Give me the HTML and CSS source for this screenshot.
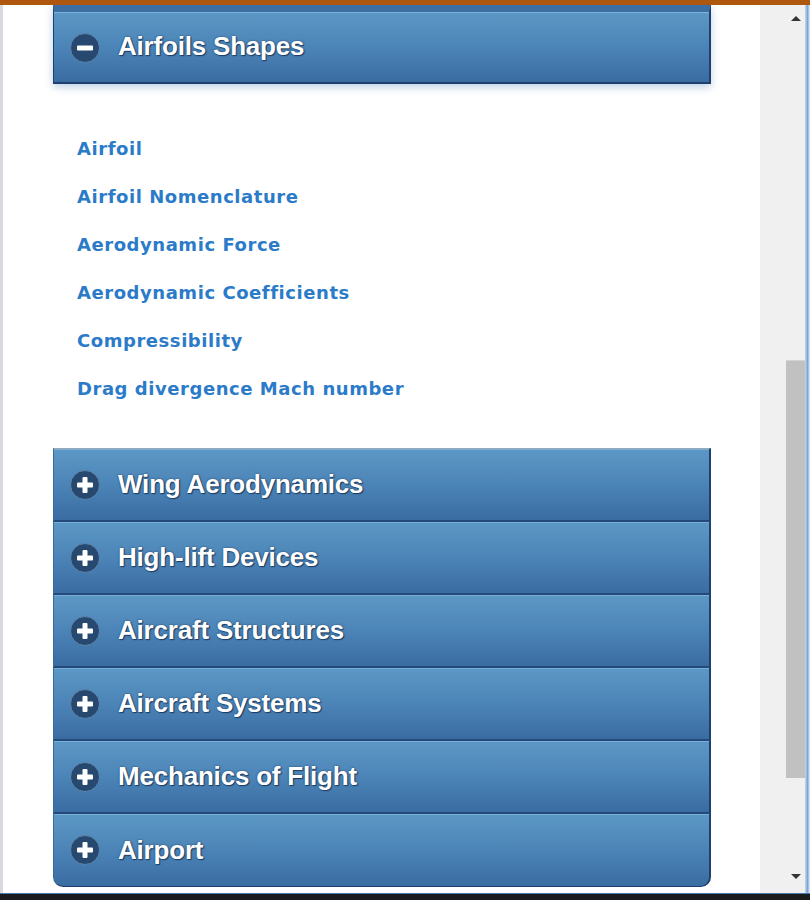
FILE: index.html
```html
<!DOCTYPE html>
<html>
<head>
<meta charset="utf-8">
<link rel="stylesheet" href="styles.css">
</head>
<body>
<div class="window">
  <div class="topbar"></div>
  <div class="main">
    <div class="content">
      <div class="accordion">
        <div class="header active">
          <span class="icon"><svg viewBox="0 0 30 30" width="30" height="30"><circle cx="15" cy="15" r="14.5" fill="#27496f" stroke="#5d86ad" stroke-width="1"/><rect x="7" y="12.5" width="16" height="5" rx="1" fill="#fff"/></svg></span>
          <span class="title">Airfoils Shapes</span>
        </div>
        <div class="panel">
          <a class="link">Airfoil</a>
          <a class="link">Airfoil Nomenclature</a>
          <a class="link">Aerodynamic Force</a>
          <a class="link">Aerodynamic Coefficients</a>
          <a class="link">Compressibility</a>
          <a class="link">Drag divergence Mach number</a>
        </div>
        <div class="group">
          <div class="header">
            <span class="icon"><svg viewBox="0 0 30 30" width="30" height="30"><circle cx="15" cy="15" r="14.5" fill="#27496f" stroke="#5d86ad" stroke-width="1"/><rect x="7" y="12.5" width="16" height="5" rx="1" fill="#fff"/><rect x="12.5" y="7" width="5" height="16" rx="1" fill="#fff"/></svg></span>
            <span class="title">Wing Aerodynamics</span>
          </div>
          <div class="header">
            <span class="icon"><svg viewBox="0 0 30 30" width="30" height="30"><circle cx="15" cy="15" r="14.5" fill="#27496f" stroke="#5d86ad" stroke-width="1"/><rect x="7" y="12.5" width="16" height="5" rx="1" fill="#fff"/><rect x="12.5" y="7" width="5" height="16" rx="1" fill="#fff"/></svg></span>
            <span class="title">High-lift Devices</span>
          </div>
          <div class="header">
            <span class="icon"><svg viewBox="0 0 30 30" width="30" height="30"><circle cx="15" cy="15" r="14.5" fill="#27496f" stroke="#5d86ad" stroke-width="1"/><rect x="7" y="12.5" width="16" height="5" rx="1" fill="#fff"/><rect x="12.5" y="7" width="5" height="16" rx="1" fill="#fff"/></svg></span>
            <span class="title">Aircraft Structures</span>
          </div>
          <div class="header">
            <span class="icon"><svg viewBox="0 0 30 30" width="30" height="30"><circle cx="15" cy="15" r="14.5" fill="#27496f" stroke="#5d86ad" stroke-width="1"/><rect x="7" y="12.5" width="16" height="5" rx="1" fill="#fff"/><rect x="12.5" y="7" width="5" height="16" rx="1" fill="#fff"/></svg></span>
            <span class="title">Aircraft Systems</span>
          </div>
          <div class="header">
            <span class="icon"><svg viewBox="0 0 30 30" width="30" height="30"><circle cx="15" cy="15" r="14.5" fill="#27496f" stroke="#5d86ad" stroke-width="1"/><rect x="7" y="12.5" width="16" height="5" rx="1" fill="#fff"/><rect x="12.5" y="7" width="5" height="16" rx="1" fill="#fff"/></svg></span>
            <span class="title">Mechanics of Flight</span>
          </div>
          <div class="header last">
            <span class="icon"><svg viewBox="0 0 30 30" width="30" height="30"><circle cx="15" cy="15" r="14.5" fill="#27496f" stroke="#5d86ad" stroke-width="1"/><rect x="7" y="12.5" width="16" height="5" rx="1" fill="#fff"/><rect x="12.5" y="7" width="5" height="16" rx="1" fill="#fff"/></svg></span>
            <span class="title">Airport</span>
          </div>
        </div>
      </div>
    </div>
    <div class="scrollbar">
      <div class="arrow up"></div>
      <div class="track"><div class="thumb"></div></div>
      <div class="arrow down"></div>
    </div>
    <div class="edge"></div>
  </div>
  <div class="taskbar"></div>
</div>
</body>
</html>
```
FILE: styles.css
```css
html, body {
  margin: 0;
  padding: 0;
  width: 810px;
  height: 900px;
  overflow: hidden;
  background: #ffffff;
}
.window {
  display: flex;
  flex-direction: column;
  width: 810px;
  height: 900px;
}
.topbar {
  height: 5px;
  background: #b0570f;
  flex: none;
  position: relative;
  z-index: 2;
}
.main {
  flex: 1;
  display: flex;
  min-height: 0;
}
.content {
  flex: 1;
  border-left: 3px solid #d7dbe0;
  padding-left: 50px;
  background: #fff;
}
.accordion {
  width: 658px;
}
.header {
  height: 73px;
  box-sizing: border-box;
  display: flex;
  align-items: center;
  padding-left: 16px;
  background: linear-gradient(#5c98c6, #4a82b5 55%, #3a6ca1);
  border-left: 1px solid #3a6a9c;
  border-right: 2px solid #1f3f6e;
  border-bottom: 2px solid #234a7a;
  box-shadow: inset 0 1px 0 #79aed6;
}
.header.active {
  height: 79px;
  border-top: 7px solid #3d6ea1;
  border-left: 1px solid #1f3f6e;
  border-bottom: 2px solid #1f3f6e;
  box-shadow: inset 0 1px 0 #7db2da, 0 3px 8px rgba(70, 120, 180, 0.35);
  position: relative;
  z-index: 1;
}
.header.last {
  height: 73px;
  border-bottom: 1px solid #1f3f6e;
  border-radius: 0 0 10px 10px;
}
.group .header:first-child {
  height: 74px;
  border-top: 1px solid #9aa7b4;
}
.icon {
  width: 30px;
  height: 30px;
  display: block;
  flex: none;
}
.icon svg {
  display: block;
}
.title {
  margin-left: 18px;
  font-family: "Liberation Sans", Arial, sans-serif;
  font-weight: bold;
  font-size: 26px;
  color: #ffffff;
  letter-spacing: -0.2px;
  text-shadow: 0 0 2px #1d3c62, 1px 1px 1px #1d3c62;
}
.header.active .title {
  margin-top: -1px;
}
.header.active .icon {
  margin-top: 2px;
}
.panel {
  display: flex;
  flex-direction: column;
  padding: 41px 0 35px 24px;
}
.link {
  display: block;
  line-height: 48px;
  height: 48px;
  font-family: "DejaVu Sans", Verdana, sans-serif;
  font-weight: bold;
  font-size: 18px;
  letter-spacing: 0.55px;
  color: #2b7bc9;
}
.scrollbar {
  width: 45px;
  flex: none;
  background: #f0f0f0;
  display: flex;
  flex-direction: column;
  align-items: flex-end;
}
.track {
  flex: 1;
  width: 19px;
  padding-top: 332px;
  padding-bottom: 92px;
  box-sizing: border-box;
  display: flex;
}
.thumb {
  flex: 1;
  background: #c1c1c1;
  border-top: 1px solid #d4d4d4;
}
.arrow {
  width: 19px;
  height: 23px;
  display: flex;
  align-items: center;
  justify-content: center;
}
.arrow::after {
  content: "";
  width: 0;
  height: 0;
  border-left: 5px solid transparent;
  border-right: 5px solid transparent;
}
.arrow.up::after {
  border-bottom: 5px solid #333;
  margin-top: 4px;
}
.arrow.down::after {
  border-top: 5px solid #333;
  margin-bottom: 10px;
}
.edge {
  width: 5px;
  flex: none;
  background: linear-gradient(90deg, #c9d9ea, #7ea6d6 50%, #e9eef5);
}
.taskbar {
  height: 7px;
  flex: none;
  background: #1a1b1d;
  border-top: 1px solid #4a79b0;
  box-sizing: border-box;
}
```
